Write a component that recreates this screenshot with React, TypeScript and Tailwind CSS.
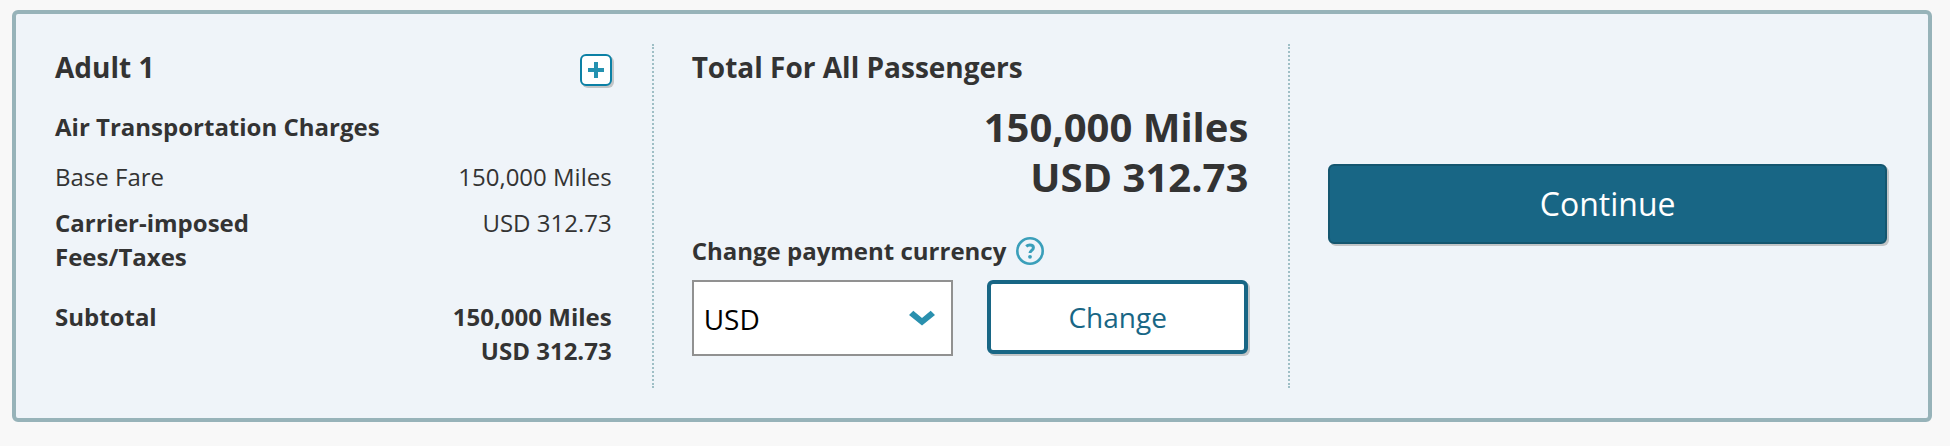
import type { ReactNode } from "react";

interface ColumnProps {
  divider?: boolean;
  children: ReactNode;
}

function Column({ divider = false, children }: ColumnProps) {
  return (
    <section
      className={
        divider
          ? "border-r-2 border-dotted border-[#9fbfc6] pt-1 pb-5 pl-[38px] pr-10"
          : "pt-1 pb-5 pl-[38px] pr-10"
      }
    >
      {children}
    </section>
  );
}

function PassengerCharges() {
  return (
    <Column divider>
      <div className="flex items-end justify-between mb-6">
        <h2 className="text-[28px] leading-[38px] font-bold">Adult 1</h2>
        <button
          type="button"
          aria-label="Show details"
          className="flex h-8 w-8 items-center justify-center rounded-md border-2 border-[#0b80a5] bg-white shadow-[2px_2px_0_#c2c5c7]"
        >
          <svg viewBox="0 0 16 16" className="h-4 w-4" fill="#2491b0" aria-hidden="true">
            <path d="M6 0h4v6h6v4h-6v6H6v-6H0V6h6z" />
          </svg>
        </button>
      </div>

      <table className="w-full text-left">
        <caption className="pb-4 text-left font-bold">Air Transportation Charges</caption>
        <tbody className="align-top">
          <tr>
            <th scope="row" className="pb-3 font-normal">Base Fare</th>
            <td className="pb-3 text-right">150,000 Miles</td>
          </tr>
          <tr>
            <th scope="row" className="pb-[26px] font-bold">
              Carrier-imposed
              <br />
              Fees/Taxes
            </th>
            <td className="pb-[26px] text-right">USD 312.73</td>
          </tr>
          <tr className="font-bold">
            <th scope="row">Subtotal</th>
            <td className="text-right">
              150,000 Miles
              <br />
              USD 312.73
            </td>
          </tr>
        </tbody>
      </table>
    </Column>
  );
}

function HelpIcon() {
  return (
    <svg viewBox="0 0 28 28" className="h-7 w-7" fill="none" stroke="#3a9fba" aria-hidden="true">
      <circle cx="14" cy="14" r="12.7" strokeWidth="2.6" />
      <path d="M10.2 9.4c1-.9 2.3-1.4 3.6-1.4 2.2 0 3.6 1 3.6 2.7 0 2.6-3.4 2.7-3.4 5.4" strokeWidth="3" />
      <circle cx="14" cy="19.8" r="1.9" fill="#3a9fba" stroke="none" />
    </svg>
  );
}

function PassengerTotal() {
  return (
    <Column divider>
      <h2 className="text-[28px] leading-[38px] font-bold">Total For All Passengers</h2>
      <p className="mt-4 text-right text-[40px] leading-[50px] font-bold">
        150,000 Miles
        <br />
        USD 312.73
      </p>

      <div className="mt-8 mb-3 flex items-center gap-2.5">
        <label htmlFor="currency" className="font-bold">
          Change payment currency
        </label>
        <button type="button" aria-label="About payment currency">
          <HelpIcon />
        </button>
      </div>

      <div className="grid grid-cols-2 items-start gap-[34px]">
        <div className="relative">
          <select
            id="currency"
            className="h-[76px] w-full appearance-none border-2 border-[#919191] bg-white pt-0.5 pl-2.5 text-[28px] text-black"
          >
            <option>USD</option>
          </select>
          <svg
            viewBox="0 0 26 16"
            className="pointer-events-none absolute top-[30px] right-[18px] h-4 w-[26px]"
            fill="#2a90ae"
            aria-hidden="true"
          >
            <path d="M0 5 4.3.8 13 8 21.7.8 26 5 13 15.5z" />
          </svg>
        </div>
        <button
          type="button"
          className="h-[74px] rounded-md border-4 border-[#186685] bg-white text-[28px] text-[#186685] shadow-[2px_2px_0_#c2c5c7]"
        >
          Change
        </button>
      </div>
    </Column>
  );
}

export default function App() {
  return (
    <div className="min-h-screen bg-[#f8f8f8] pt-2.5 pb-6 pl-3 pr-[18px] font-['Open_Sans',sans-serif] text-[24px] leading-[34px] text-[#333]">
      <main className="grid grid-cols-3 rounded-md border-4 border-[#97b3b9] bg-[#eff4f9] px-px py-[30px]">
        <PassengerCharges />
        <PassengerTotal />
        <Column>
          <button
            type="button"
            className="mt-[116px] h-20 w-full rounded-md border-2 border-[#14566f] bg-[#186685] text-[32px] text-white shadow-[2px_2px_0_#c2c5c7]"
          >
            Continue
          </button>
        </Column>
      </main>
    </div>
  );
}
